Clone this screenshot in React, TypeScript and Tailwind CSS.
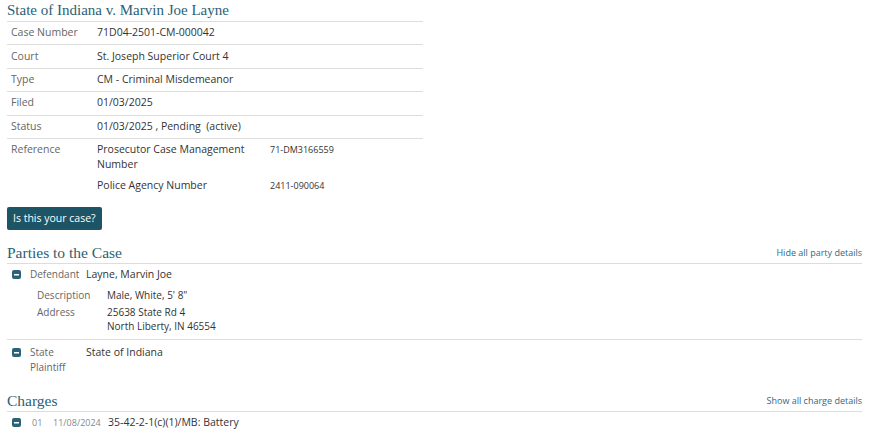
import React from "react";

const heading = "font-['Liberation_Serif',serif] text-[#2b5f73]";

function MinusIcon() {
  return (
    <svg width="9" height="9" viewBox="0 0 9 9" className="shrink-0">
      <rect x="0" y="0" width="9" height="9" rx="2" fill="#2b6278" />
      <rect x="2" y="4" width="5" height="1.5" fill="#fff" />
    </svg>
  );
}

const rows: [string, string][] = [
  ["Case Number", "71D04-2501-CM-000042"],
  ["Court", "St. Joseph Superior Court 4"],
  ["Type", "CM - Criminal Misdemeanor"],
  ["Filed", "01/03/2025"],
  ["Status", "01/03/2025 , Pending  (active)"],
];

const details: [string, string[]][] = [
  ["Description", ['Male, White, 5\' 8"']],
  ["Address", ["25638 State Rd 4", "North Liberty, IN 46554"]],
];

export default function App() {
  return (
    <div className="min-h-screen bg-white px-[7px] pt-[1px] font-['Open_Sans',sans-serif] text-[10.5px] text-[#333]">
      {/* case summary */}
      <div className="w-[416px]">
        <h1 className={`${heading} text-[15px] leading-[19px] pb-[1px] border-b border-[#ddd]`}>
          State of Indiana v. Marvin Joe Layne
        </h1>
        {rows.map(([k, v]) => (
          <div key={k} className="grid grid-cols-[86px_1fr] h-[23.4px] items-center border-b border-[#ddd] px-1">
            <span className="text-[#666]">{k}</span>
            <span className="whitespace-pre">{v}</span>
          </div>
        ))}
        <div className="grid grid-cols-[86px_1fr] px-1 pt-[3px]">
          <span className="text-[#666] leading-[15px]">Reference</span>
          <div className="flex flex-col gap-[6px]">
            <div className="grid grid-cols-[173px_1fr]">
              <span className="leading-[15px] pr-4">Prosecutor Case Management Number</span>
              <span className="text-[9px] leading-[15px]">71-DM3166559</span>
            </div>
            <div className="grid grid-cols-[173px_1fr]">
              <span className="leading-[15px]">Police Agency Number</span>
              <span className="text-[9px] leading-[15px]">2411-090064</span>
            </div>
          </div>
        </div>
      </div>

      <button className="mt-[14px] h-[23px] px-[6px] bg-[#1d5466] text-white text-[10.5px] rounded-[2px]">
        Is this your case?
      </button>

      {/* parties */}
      <div className="w-[855px] mt-[13px]">
        <div className="flex items-end justify-between border-b border-[#ddd] pb-[1px]">
          <h2 className={`${heading} text-[15.5px] leading-[19px]`}>Parties to the Case</h2>
          <span className="text-[9px] text-[#2f6a80] pb-[2px]">Hide all party details</span>
        </div>

        <div className="border-b border-[#ddd] pb-[6px] pt-[3px]">
          <div className="flex items-center pl-[5px]">
            <MinusIcon />
            <span className="ml-[9px] w-[56px] text-[10px] text-[#666]">Defendant</span>
            <span className="text-[10.5px]">Layne, Marvin Joe</span>
          </div>
          <div className="flex flex-col pl-[30px] mt-[5px] text-[10px] leading-[14px] gap-y-[3px]">
            {details.map(([k, lines]) => (
              <div key={k} className="flex">
                <span className="w-[70px] shrink-0 text-[#666]">{k}</span>
                <div className="flex flex-col">
                  {lines.map((l) => (
                    <span key={l}>{l}</span>
                  ))}
                </div>
              </div>
            ))}
          </div>
        </div>

        <div className="flex items-start pl-[5px] pt-[5px]">
          <span className="mt-[3px]"><MinusIcon /></span>
          <span className="ml-[9px] w-[56px] text-[10px] text-[#666] leading-[15px]">
            State
            <br />
            Plaintiff
          </span>
          <span className="text-[10.5px] leading-[15px]">State of Indiana</span>
        </div>

        <div className="flex items-end justify-between border-b border-[#ddd] pb-[1px] mt-[16px]">
          <h2 className={`${heading} text-[15.5px] leading-[19px]`}>Charges</h2>
          <span className="text-[9px] text-[#2f6a80] pb-[2px]">Show all charge details</span>
        </div>
        <div className="flex items-center pl-[5px] pt-[3px]">
          <MinusIcon />
          <span className="ml-[11px] w-[21px] text-[9px] text-[#888]">01</span>
          <span className="w-[55px] text-[9px] text-[#888]">11/08/2024</span>
          <span className="text-[10.5px]">35-42-2-1(c)(1)/MB: Battery</span>
        </div>
      </div>
    </div>
  );
}
